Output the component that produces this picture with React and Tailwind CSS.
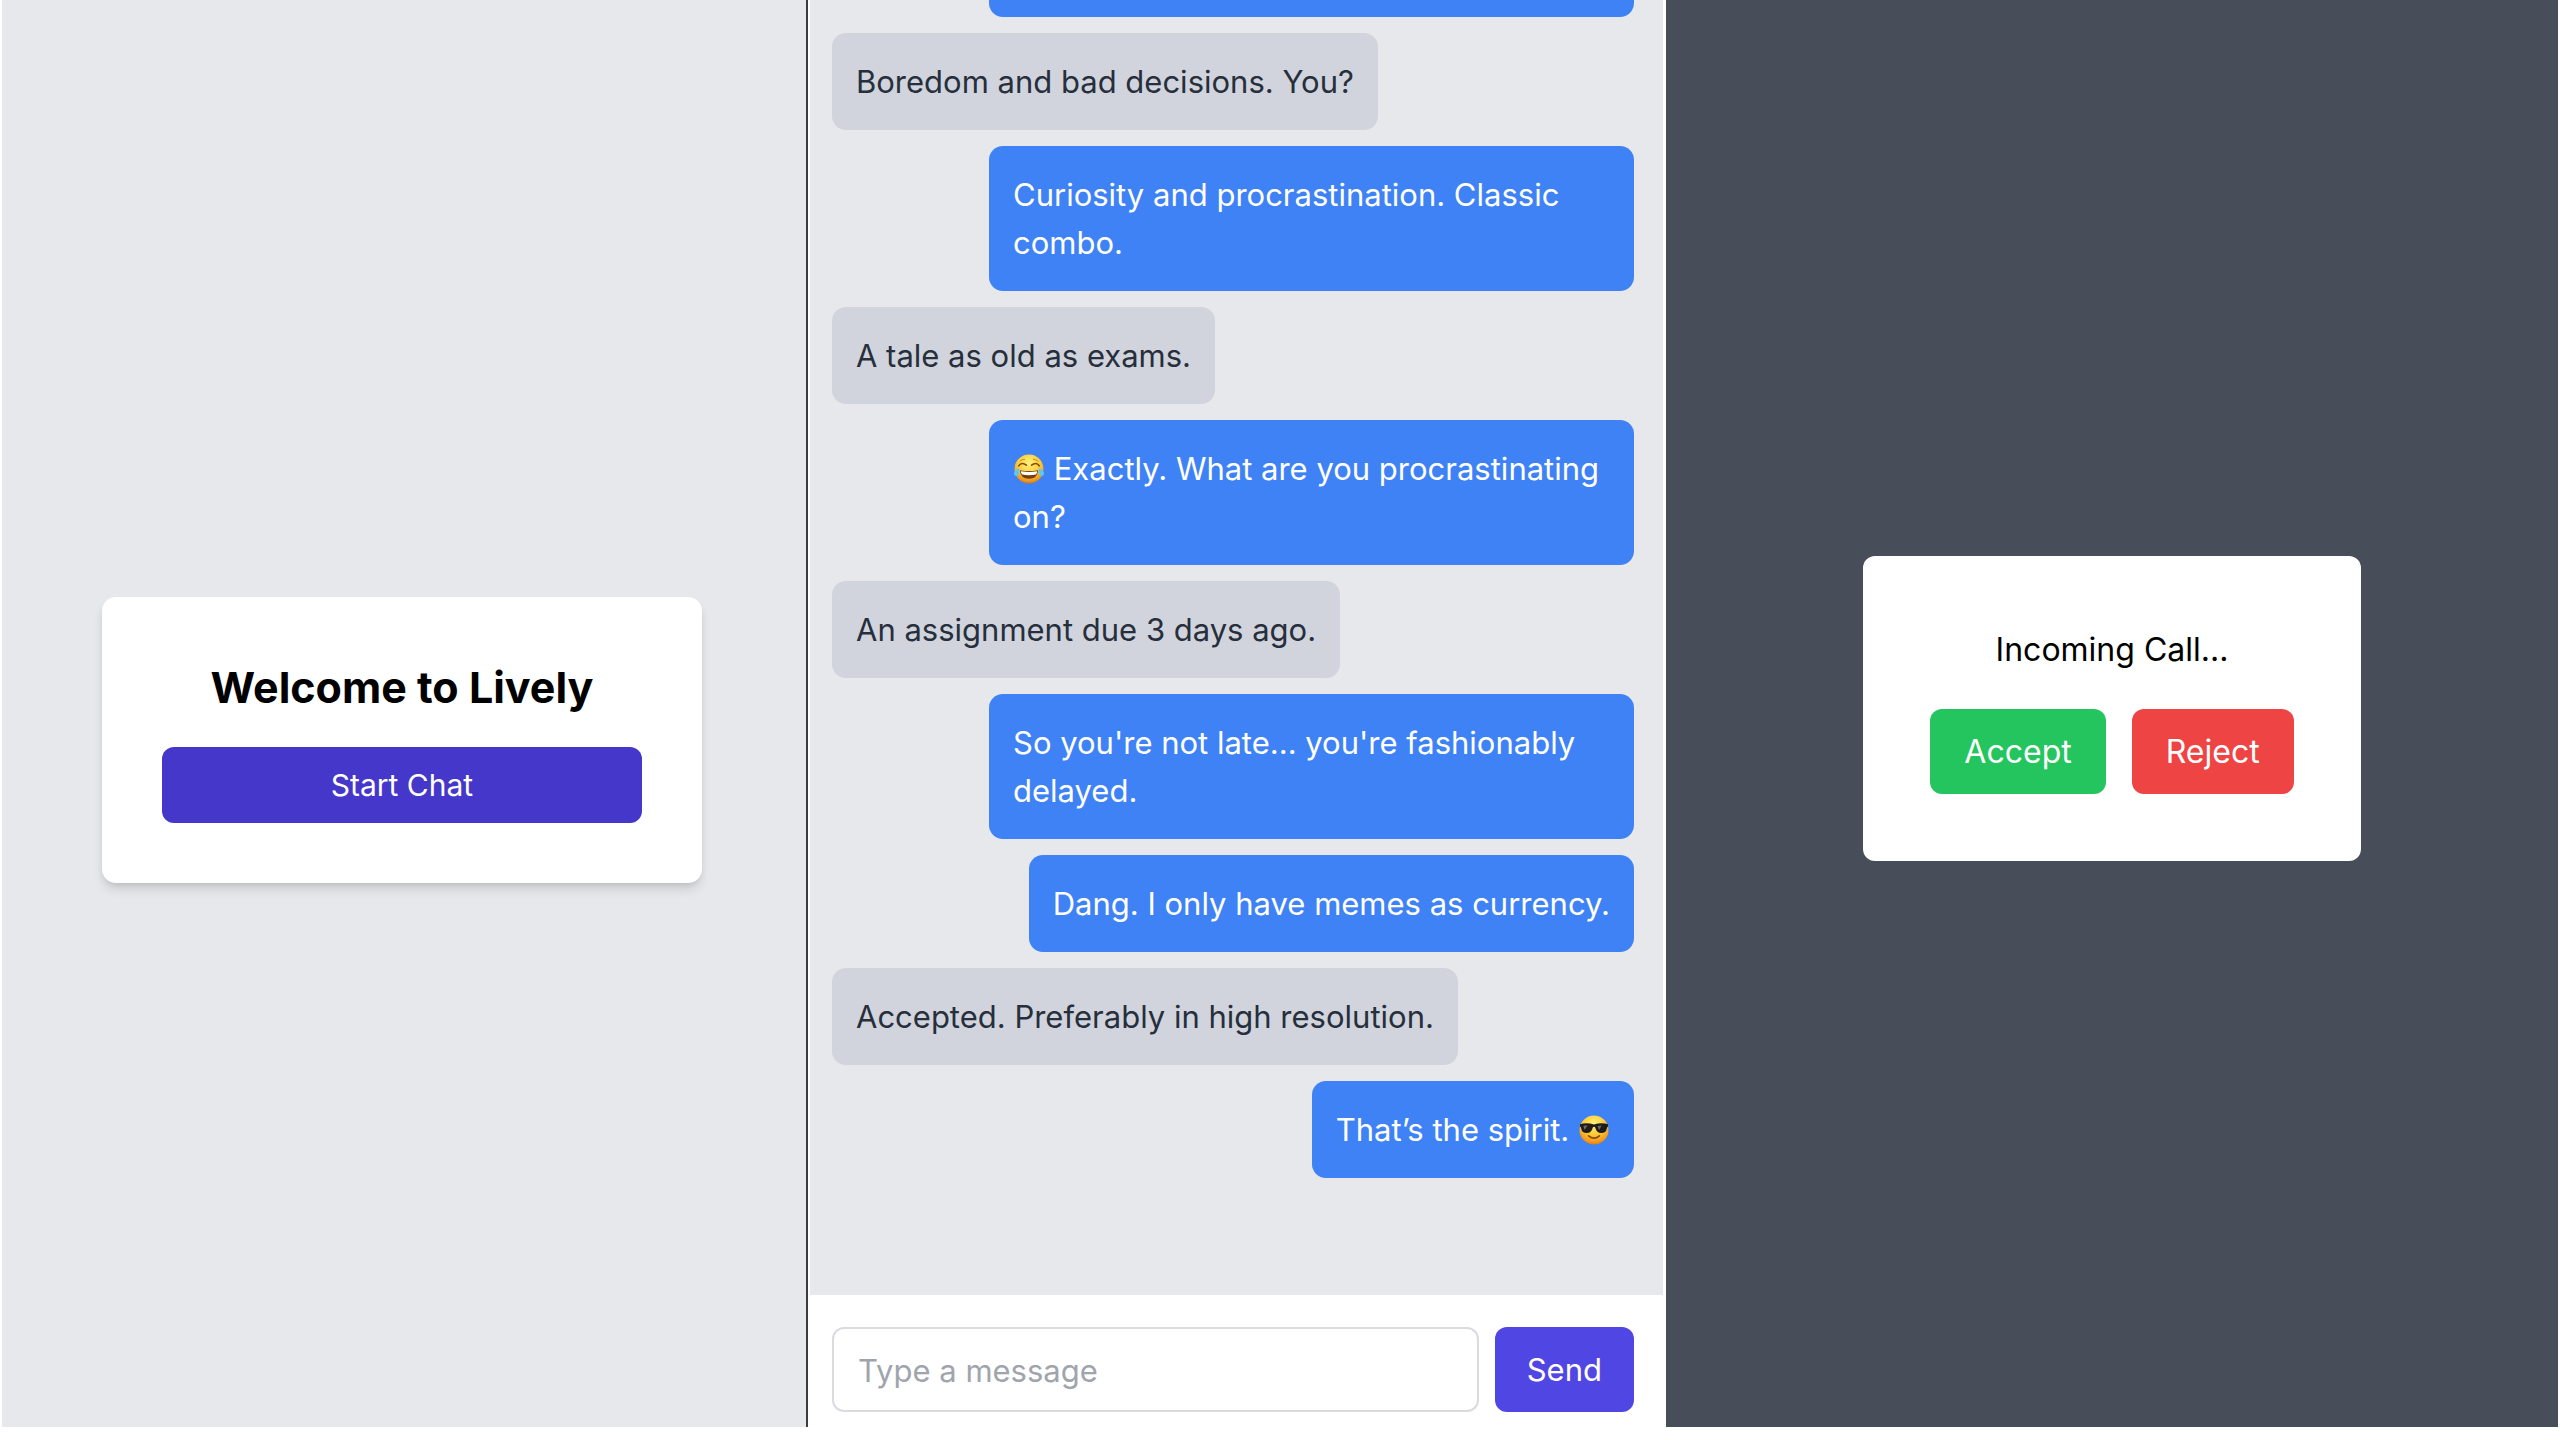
function JoyEmoji() {
  return (
    <svg viewBox="0 0 32 32" role="img" aria-label="face with tears of joy" className="inline-block size-8 align-[-5px]">
      <defs>
        <radialGradient id="joyFace" cx="50%" cy="30%" r="72%">
          <stop offset="0" stopColor="#fff27a" />
          <stop offset="0.5" stopColor="#fcd03c" />
          <stop offset="0.85" stopColor="#eb9a22" />
          <stop offset="1" stopColor="#c96f1c" />
        </radialGradient>
      </defs>
      <circle cx="16" cy="16" r="14.5" fill="url(#joyFace)" />
      <path d="M5.8 12.8q3-4.3 7.6-.6M18.6 12.2q4.6-3.7 7.6.6" fill="none" stroke="#8a4a10" strokeWidth="1.6" strokeLinecap="round" />
      <path d="M7 8.2q2-2 4.6-2M25 8.2q-2-2-4.6-2" fill="none" stroke="#c98a1e" strokeWidth="1" strokeLinecap="round" />
      <path d="M6.8 17.2q9.2 1.8 18.4 0q-.8 8.6-9.2 8.6t-9.2-8.6z" fill="#7a3c12" />
      <path d="M7.8 18.2q8.2 1.4 16.4 0q-.3 2.2-1.3 3.4q-6.9 1.2-13.8 0q-1-1.2-1.3-3.4z" fill="#fff" />
      <path d="M6.2 15.2q-5.4 1.8-5.2 5.6q.6 3 3.4 2q2.6-1.6 1.8-7.6zM25.8 15.2q5.4 1.8 5.2 5.6q-.6 3-3.4 2q-2.6-1.6-1.8-7.6z" fill="#5cc6f4" />
    </svg>
  );
}

function CoolEmoji() {
  return (
    <svg viewBox="0 0 32 32" role="img" aria-label="smiling face with sunglasses" className="inline-block size-8 align-[-5px]">
      <defs>
        <radialGradient id="coolFace" cx="50%" cy="28%" r="74%">
          <stop offset="0" stopColor="#fff27a" />
          <stop offset="0.5" stopColor="#fdcb38" />
          <stop offset="0.85" stopColor="#f39a1c" />
          <stop offset="1" stopColor="#d9761a" />
        </radialGradient>
      </defs>
      <circle cx="16" cy="16" r="14.5" fill="url(#coolFace)" />
      <path d="M2 10.2q7-2 14 .4q7-2.4 14-.4v2.2q-1 .4-1.2 2q-.8 4.6-5.6 4.6q-4.6 0-5.8-5q-.4-1.2-1.4-1.2t-1.4 1.2q-1.2 5-5.8 5q-4.8 0-5.6-4.6q-.2-1.6-1.2-2z" fill="#1d1c1b" />
      <path d="M5.4 11.8l4.2-.4l-3 4.6zM19.6 11.9l4.2-.5l-2.8 4.6z" fill="#6c6a66" />
      <path d="M10.6 21.8q5.4 4.6 10.8 0" fill="none" stroke="#8a4a10" strokeWidth="1.6" strokeLinecap="round" />
    </svg>
  );
}

const messages = [
  { mine: false, text: "Boredom and bad decisions. You?" },
  { mine: true, text: "Curiosity and procrastination. Classic combo." },
  { mine: false, text: "A tale as old as exams." },
  { mine: true, text: <><JoyEmoji /> Exactly. What are you procrastinating on?</> },
  { mine: false, text: "An assignment due 3 days ago." },
  { mine: true, text: "So you're not late... you're fashionably delayed." },
  { mine: true, text: "Dang. I only have memes as currency." },
  { mine: false, text: "Accepted. Preferably in high resolution." },
  { mine: true, text: <>That’s the spirit. <CoolEmoji /></> },
];

function Message({ mine, children }) {
  return (
    <li
      className={
        mine
          ? "max-w-[645px] shrink-0 self-end rounded-[14px] bg-[#3e82f5] px-6 pt-[25px] pb-6 text-white"
          : "max-w-[645px] shrink-0 self-start rounded-[14px] bg-[#d1d4dd] px-6 pt-[25px] pb-6 text-[#262f3b]"
      }
    >
      {children}
    </li>
  );
}

function WelcomePanel() {
  return (
    <section className="flex items-center justify-center bg-[#e6e8eb] pt-[53px] pr-1">
      <div className="w-3/4 rounded-[14px] bg-white p-[60px] text-center shadow-[0_8px_12px_-2px_rgba(0,0,0,0.12),0_3px_6px_-2px_rgba(0,0,0,0.10)]">
        <h1 className="mb-[30px] text-[43px] leading-[60px] font-bold text-black">Welcome to Lively</h1>
        <button type="button" className="block h-[76px] w-full rounded-xl bg-[#4437c9] text-[30px] leading-[44px] text-white">
          Start Chat
        </button>
      </div>
    </section>
  );
}

function ChatPanel() {
  return (
    <section className="flex min-h-0 flex-col border-l-2 border-[#383d43] bg-white text-[31px] leading-[48px]">
      <ul className="mr-[3px] ml-0.5 flex min-h-0 flex-1 flex-col justify-end gap-4 overflow-hidden bg-[#e6e8eb] pr-[29px] pb-[117px] pl-[22px]">
        {/* tail of the bubble that is scrolled past the top edge */}
        <li aria-hidden="true" className="h-10 w-[645px] shrink-0 self-end rounded-[14px] bg-[#3e82f5]" />
        {messages.map((m, i) => (
          <Message key={i} mine={m.mine}>{m.text}</Message>
        ))}
      </ul>
      <form className="flex gap-4 pt-8 pr-8 pb-[15px] pl-6" onSubmit={(e) => e.preventDefault()}>
        <input
          type="text"
          aria-label="Type a message"
          placeholder="Type a message"
          className="h-[85px] min-w-0 flex-1 rounded-xl border-2 border-[#d9dbdf] bg-white px-6 pt-0.5 text-[#262f3b] placeholder:text-[#a0a4ad]"
        />
        <button type="submit" className="h-[85px] rounded-xl bg-[#5046e3] px-8 text-white">Send</button>
      </form>
    </section>
  );
}

function CallPanel() {
  return (
    <section className="flex items-center justify-center bg-[#474d59] pb-2.5">
      <div className="rounded-xl bg-white p-[67px] text-center text-[32px] leading-[54px]">
        <p className="mb-8 text-black">Incoming Call...</p>
        <div className="flex gap-[26px]">
          <button type="button" className="h-[85px] rounded-xl bg-[#24c55e] px-[34px] text-white">Accept</button>
          <button type="button" className="h-[85px] rounded-xl bg-[#ef4444] px-[34px] text-white">Reject</button>
        </div>
      </div>
    </section>
  );
}

export default function App() {
  return (
    <main className="grid h-screen grid-cols-[804fr_860fr_892fr] grid-rows-[minmax(0,1fr)] bg-white px-0.5 pb-[13px] font-[Inter,sans-serif]">
      <WelcomePanel />
      <ChatPanel />
      <CallPanel />
    </main>
  );
}
